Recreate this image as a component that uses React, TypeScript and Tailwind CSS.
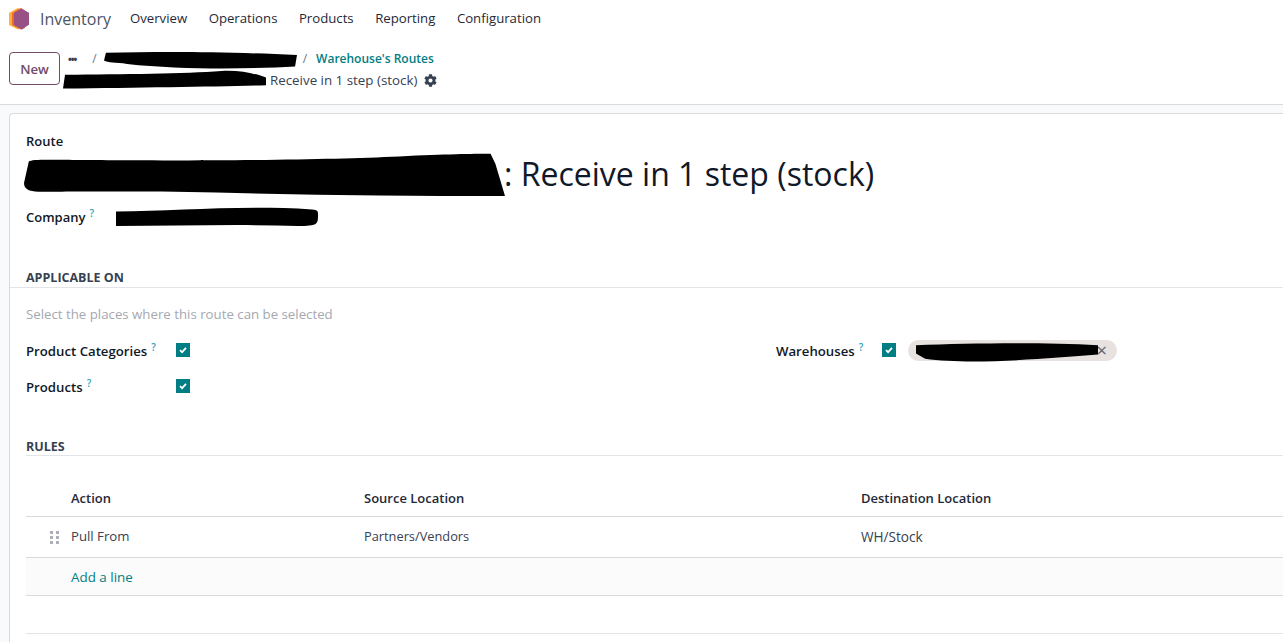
import { FaCog } from "react-icons/fa";

const font = { fontFamily: '"Open Sans", "Noto Sans", sans-serif' };

function Help() {
  return <sup className="text-[10px] leading-none text-[#2a9fc0] font-semibold ml-[4px] relative -top-[5px]">?</sup>;
}

function Check() {
  return (
    <span className="w-[14px] h-[14px] bg-[#017e84] flex items-center justify-center shrink-0">
      <svg width="10" height="10" viewBox="0 0 10 10" fill="none">
        <path d="M2 5.2 L4.1 7.2 L8 2.9" stroke="#fff" strokeWidth="1.8" />
      </svg>
    </span>
  );
}

function Scribble({ className, d }: { className: string; d: string }) {
  return (
    <svg className={"absolute " + className} viewBox="0 0 100 100" preserveAspectRatio="none">
      <path d={d} fill="#000" />
    </svg>
  );
}

export default function App() {
  return (
    <div className="w-[1283px] h-[642px] overflow-hidden bg-white text-[13.2px] text-[#374151] relative flex flex-col" style={font}>
      <nav className="h-[37px] flex items-center shrink-0">
        <svg className="ml-[9px] w-[20px] h-[22px]" viewBox="0 0 20 22">
          <path d="M6 1.5 L9 0 L12 1.5 V20 L9 21.5 L6 20 L0 17 V5 Z" fill="#fbb03b" />
          <path d="M9 1.6 L12 0 L16 3 V20 L12 21.5 L9 20 L3 17 V5 Z" fill="#f06a2a" />
          <path d="M12.5 0.5 L20 4.8 V16.8 L12.5 21.5 L5 17 V5 Z" fill="#985184" />
        </svg>
        <span className="ml-[11px] text-[16px] text-[#4b5563] leading-none">Inventory</span>
        <div className="flex ml-[19px] gap-[21.5px] text-[#1f2937]">
          <span>Overview</span>
          <span>Operations</span>
          <span>Products</span>
          <span>Reporting</span>
          <span>Configuration</span>
        </div>
      </nav>

      <div className="h-[68px] shrink-0 border-b border-[#d8dadd] flex items-start pl-[9px] pt-[15px] relative">
        <button className="w-[51px] h-[33px] pt-[2px] border border-[#714b67] rounded-[4px] text-[#714b67] font-semibold text-[13.2px] flex items-center justify-center">
          New
        </button>
        <div className="ml-[8px] -mt-[2px]">
          <div className="h-[18px] flex items-center text-[12px]">
            <span className="font-bold text-[#374151] text-[10px] leading-none tracking-[-1px]">•••</span>
            <span className="ml-[16px] text-[#6b7280]">/</span>
            <span className="ml-[206px] text-[#6b7280]">/</span>
            <span className="ml-[9px] text-[#017e84] font-semibold">Warehouse's Routes</span>
          </div>
          <div className="h-[20px] mt-[2px] flex items-center text-[13.35px] pl-[202px] whitespace-nowrap">
            <span>Receive in 1 step (stock)</span>
            <FaCog className="ml-[7px] w-[13px] h-[13px] text-[#374151]" />
          </div>
        </div>
        <Scribble className="left-[104px] top-[15px] w-[193px] h-[17px]" d="M1 5 C30 -3 60 -3 100 18 L99 85 C75 100 40 105 12 70 C6 60 2 65 0 50 Z" />
        <Scribble className="left-[63px] top-[33px] w-[203px] h-[19px]" d="M1 25 C30 22 60 20 78 5 C88 0 95 20 100 40 L100 80 C75 88 40 92 0 98 Z" />
      </div>

      <div className="flex-1 bg-[#f9fafb] pl-[9px] pt-[8px] min-h-0">
        <div className="h-full bg-white border-l border-t border-[#d8dadd] rounded-tl-[4px] pl-[16px] flex flex-col relative">
          <label className="mt-[17px] font-semibold text-[13px] text-[#111827] h-[20px] leading-[20px]">Route</label>
          <div className="h-[44px] mt-[1px] flex items-center text-[32px] leading-none text-[#111827] pl-[478px] whitespace-nowrap">
            : Receive in 1 step (stock)
          </div>
          <Scribble className="left-[14px] top-[39px] w-[481px] h-[43px]" d="M1 20 C2 14 4 16 20 17 C50 18 65 14 78 8 C88 3 93 2 97 2 L98 25 L100 100 C80 100 60 98 40 92 C25 88 8 90 3 90 C1 90 0 84 0 70 Z" />
          <div className="mt-[12px] h-[20px] flex items-center font-semibold text-[13px] text-[#111827]">
            <span>Company</span>
            <Help />
          </div>
          <Scribble className="left-[106px] top-[93px] w-[202px] h-[20px]" d="M0 22 C30 22 60 -10 97 12 C100 15 100 20 100 40 C100 85 100 95 90 95 C60 85 30 95 0 95 Z" />

          <div className="mt-[38px] border-b border-[#e2e4e8] -ml-[16px] pl-[16px] pt-[2px] h-[22px] font-bold text-[12.5px] text-[#374151] leading-[20px]">
            APPLICABLE ON
          </div>
          <div className="mt-[16px] h-[20px] leading-[20px] text-[#a4a8b0] text-[13.25px]">Select the places where this route can be selected</div>

          <div className="mt-[16px] flex h-[20px] items-center">
            <div className="w-[150px] pt-[4px] flex items-center font-semibold text-[#111827]">
              <span>Product Categories</span>
              <Help />
            </div>
            <Check />
            <div className="ml-[586px] w-[106px] pt-[4px] flex items-center font-semibold text-[#111827]">
              <span>Warehouses</span>
              <Help />
            </div>
            <Check />
            <div className="ml-[12px] w-[209px] h-[21px] rounded-full bg-[#e7e1e0] flex items-center justify-end pr-[10px] relative">
              <span className="text-[19px] leading-none text-[#5f6670]">×</span>
              <Scribble className="left-[8px] top-[2px] w-[182px] h-[21px]" d="M0 15 C30 5 70 0 100 15 L100 60 C70 80 30 110 5 80 L0 55 Z" />
            </div>
          </div>
          <div className="mt-[16px] flex h-[20px] items-center">
            <div className="w-[150px] pt-[4px] flex items-center font-semibold text-[#111827]">
              <span>Products</span>
              <Help />
            </div>
            <Check />
          </div>

          <div className="mt-[38px] border-b border-[#e2e4e8] pt-[3px] h-[22px] font-bold text-[12.5px] text-[#374151] leading-[20px]">
            RULES
          </div>

          <div className="mt-[21px] flex flex-col">
            <div className="h-[40px] pt-[4px] flex items-center border-b border-[#d8dadd] font-semibold text-[13px] text-[#1f2937]">
              <span className="ml-[45px] w-[293px]">Action</span>
              <span className="w-[497px]">Source Location</span>
              <span>Destination Location</span>
            </div>
            <div className="h-[41px] flex items-center border-b border-[#d8dadd]">
              <svg className="ml-[24px] w-[9px] h-[13px]" viewBox="0 0 9 13" fill="#adb0b8">
                <rect x="0" y="0" width="3" height="3" /><rect x="6" y="0" width="3" height="3" />
                <rect x="0" y="5" width="3" height="3" /><rect x="6" y="5" width="3" height="3" />
                <rect x="0" y="10" width="3" height="3" /><rect x="6" y="10" width="3" height="3" />
              </svg>
              <span className="ml-[12px] w-[293px]">Pull From</span>
              <span className="w-[497px] text-[12.8px]">Partners/Vendors</span>
              <span className="text-[13.6px]">WH/Stock</span>
            </div>
            <div className="h-[38px] pt-[2px] flex items-center border-b border-[#d8dadd] bg-[#fbfbfb]">
              <span className="ml-[45px] text-[#017e84] text-[13.4px]">Add a line</span>
            </div>
            <div className="h-[38px] border-b border-[#e2e4e8]" />
          </div>
        </div>
      </div>
    </div>
  );
}
